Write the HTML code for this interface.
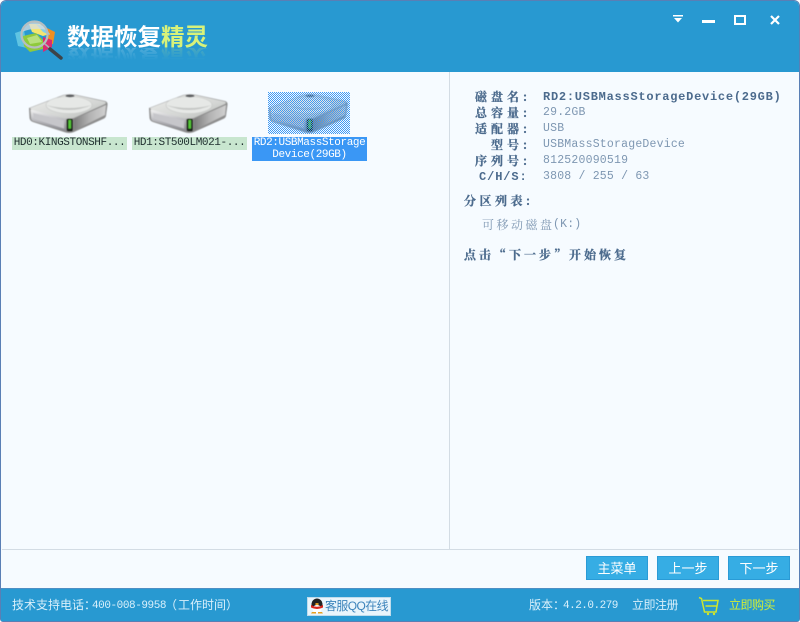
<!DOCTYPE html>
<html><head><meta charset="utf-8">
<style>
html,body{margin:0;padding:0;background:#fff;}
#w{position:relative;width:800px;height:622px;overflow:hidden;font-family:"Liberation Mono","Noto Serif CJK SC",serif;font-size:12px;}
#frame{position:absolute;left:0;top:0;width:798px;height:620px;border:1px solid #5a7fb5;border-radius:6px 6px 3px 3px;background:#f6fbff;overflow:hidden;}
.a{position:absolute;white-space:nowrap;line-height:14px;}
.lab{color:#4c6b8d;font-weight:bold;letter-spacing:4px;font-family:"Noto Serif CJK SC",serif;-webkit-text-stroke:.3px #4c6b8d;}
.val{color:#7e97b2;font-size:11.5px;letter-spacing:.2px;left:543px;font-family:"Liberation Mono",monospace;}
.cap{background:#c8e6cf;color:#1f2f2f;font-size:11px;letter-spacing:-.4px;height:13px;line-height:13px;text-align:center;width:115px;position:absolute;top:137px;font-family:"Liberation Mono",monospace;}
.btn{position:absolute;top:556px;width:60px;height:22px;background:#36ade4;border:1px solid #2a9bd6;color:#fff;text-align:center;line-height:23px;font-size:13px;font-family:"WenQuanYi Zen Hei",sans-serif;}
.st{color:#d9f0fb;font-family:"WenQuanYi Zen Hei",sans-serif;}
.n{font-family:"Liberation Mono",monospace;font-size:11px;color:#d9f0fb;}
.title{font:bold 23.500px/28px 'WenQuanYi Zen Hei','Noto Sans CJK SC',sans-serif;color:#fff;}
</style></head>
<body><div id="w">
<div id="frame"></div>
<div class="a" style="left:1px;top:1px;width:798px;height:71px;background:#2899d1;border-radius:5px 5px 0 0;"></div>
<div class="a" style="left:1px;top:588px;width:798px;height:33px;background:#2899d1;border-top:1px solid #4d8fc4;box-sizing:border-box;"></div>
<div class="a" style="left:449px;top:72px;width:1px;height:477px;background:#d3dce4;"></div>
<div class="a" style="left:2px;top:549px;width:796px;height:1px;background:#d3dce4;"></div>

<svg class="a" style="left:0;top:0" width="800" height="622" viewBox="0 0 800 622">
<defs>
<linearGradient id="top" x1="0" y1="0" x2="1" y2="1"><stop offset="0" stop-color="#eeeeec"/><stop offset=".6" stop-color="#d4d6d4"/><stop offset="1" stop-color="#b4b6b4"/></linearGradient>
<linearGradient id="front" x1="0" y1="0" x2="0" y2="1"><stop offset="0" stop-color="#f4f4f4"/><stop offset=".4" stop-color="#c4c4c8"/><stop offset="1" stop-color="#84848a"/></linearGradient>
<linearGradient id="side" x1="0" y1="0" x2="1" y2="0"><stop offset="0" stop-color="#7c7c7c"/><stop offset=".5" stop-color="#b4b4b4"/><stop offset="1" stop-color="#d0d0d0"/></linearGradient>
<filter id="soft" x="-5%" y="-5%" width="110%" height="110%"><feGaussianBlur stdDeviation=".45"/></filter>
<g id="drive" filter="url(#soft)">
<path d="M29 108 L63 95 Q70 93.500 77 95 L105 101 Q108 102 107.500 105 L106 116 Q105.500 118 103 119 L74 132 Q69 134 64 132 L33 122 Q30 121 29.500 118 Z" fill="#8e8e8e"/>
<path d="M30 108 L63 95.500 Q70 94 77 95.500 L104.500 101.500 Q107 102.500 105 104 L76 117 Q70 120 64 118.500 L32 110.500 Z" fill="url(#top)"/>
<ellipse cx="69" cy="105" rx="23" ry="8.500" fill="#e6e8e6" stroke="#c6c8c6" stroke-width=".6"/>
<path d="M46 105 Q69 115 92 105 Q69 111 46 105Z" fill="#c4c6c4"/>
<ellipse cx="70" cy="96" rx="4.500" ry="1.300" fill="#55575a"/>
<path d="M30.500 109.500 L66 119 L66 131.500 L33 121 Q31 120 31 117 Z" fill="url(#front)"/>
<path d="M33 113 L64 120.500 L64 128.500 L34 119 Z" fill="#c6c6ca"/>
<path d="M74 119 L106 105 L105 115 L74 130.500 Z" fill="url(#side)"/>
<rect x="66.500" y="118.500" width="6.500" height="13" rx="2" fill="#1c221b"/>
<rect x="68.500" y="120" width="2.500" height="8.500" fill="#55c838"/>
</g>
<pattern id="ck" width="2" height="2" patternUnits="userSpaceOnUse"><rect width="1" height="1" fill="#4099f3"/><rect x="1" y="1" width="1" height="1" fill="#4099f3"/></pattern>
</defs>

<!-- logo -->
<path d="M15 33 L24 30 L27 48 L18 46 Z" fill="#5fc4e2"/>
<path d="M47 28 L55 32 L53 44 L46 45 Z" fill="#ee8f22"/>
<path d="M29 24 L40 24 L50 34 L43 36 L32 32 Z" fill="#f4e670"/>
<path d="M36 24 L46 27 L50 35 L43 32 Z" fill="#86cfe8"/>
<path d="M23 36 L36 33 L44 41 L43 49 L30 52 L24 46 Z" fill="#8fca3c"/>
<path d="M27 38 L37 35 L42 42 L30 44 Z" fill="#b8e07e"/>
<path d="M43 37 L52 40 L52 47 L43 52 Z" fill="#d92b72"/>
<path d="M22 32 A13 13 0 0 1 47 30 Q33 27 22 32Z" fill="#d8dee0" fill-opacity=".75"/>
<circle cx="34.500" cy="34.500" r="13" fill="none" stroke="#b6bec1" stroke-width="2.200"/>
<path d="M45 44 L52 50" stroke="#aab2b5" stroke-width="1.500"/>
<path d="M50 49 L61 58" stroke="#3d4448" stroke-width="3.500" stroke-linecap="round"/>

<!-- drives -->
<use href="#drive"/>
<use href="#drive" x="120"/>
<g>
<rect x="268" y="92" width="82" height="42" fill="#f6fbff"/>
<use href="#drive" x="240"/>
<rect x="268" y="92" width="82" height="42" fill="url(#ck)"/>
</g>

<!-- window icons -->
<path d="M673 15h10v1.500h-10z" fill="#fff"/>
<path d="M674 18h8l-4 4.500z" fill="#fff"/>
<rect x="702" y="20" width="13" height="3" fill="#fff"/>
<rect x="735" y="16" width="10" height="8" fill="none" stroke="#fff" stroke-width="2"/>
<path d="M771 16 L779 24 M779 16 L771 24" stroke="#fff" stroke-width="2.200"/>

<!-- QQ button -->
<rect x="307.500" y="597.500" width="83" height="18" fill="#e9f5fc" stroke="#bfdcec"/>
<ellipse cx="317" cy="604.500" rx="5.500" ry="6" fill="#222"/>
<ellipse cx="317" cy="609" rx="4.500" ry="4" fill="#fff"/>
<path d="M311 605 Q317 608.500 323 605 L323 607.500 Q317 610.500 311 607.500Z" fill="#d9261c"/>
<ellipse cx="317" cy="604" rx="1.800" ry="1" fill="#e8a020"/>
<path d="M312 612h4v1.500h-5zM318 612h4l1 1.500h-5z" fill="#e8a020"/>

<!-- cart -->
<path d="M699 597.500 L701.500 598.500 L704.500 612 L716 612 L718 600.500 L703 600.500 M705.500 606 L717 606" fill="none" stroke="#cfe62c" stroke-width="1.500"/>
<circle cx="708" cy="614" r="1.200" fill="#cfe62c"/><circle cx="714" cy="614" r="1.200" fill="#cfe62c"/>
</svg>

<!-- title -->
<div class="a title" style="left:67px;top:21px;">数据恢复<span style="color:#d8f27a">精灵</span></div>
<div class="a" style="left:67px;top:48px;height:12px;width:145px;overflow:hidden;opacity:.18;-webkit-mask-image:linear-gradient(to bottom,#000,transparent);mask-image:linear-gradient(to bottom,#000,transparent);"><div class="title" style="transform:scaleY(-1);margin-top:-4px;line-height:28px;">数据恢复<span style="color:#d8f27a">精灵</span></div></div>

<!-- captions -->
<div class="cap" style="left:12px;">HD0:KINGSTONSHF...</div>
<div class="cap" style="left:132px;">HD1:ST500LM021-...</div>
<div class="cap" style="left:252px;height:24px;line-height:12px;background:#3a97f5;color:#fff;">RD2:USBMassStorage<br>Device(29GB)</div>

<!-- details -->
<div class="a lab" style="left:475px;top:90px;">磁盘名:</div>
<div class="a" style="left:543px;top:90px;color:#4c6b8d;font:bold 12px/14px 'Liberation Mono',monospace;letter-spacing:.75px;">RD2:USBMassStorageDevice(29GB)</div>
<div class="a lab" style="left:475px;top:106px;">总容量:</div><div class="a val" style="top:106px;">29.2GB</div>
<div class="a lab" style="left:475px;top:122px;">适配器:</div><div class="a val" style="top:122px;">USB</div>
<div class="a lab" style="left:491px;top:138px;">型号:</div><div class="a val" style="top:138px;">USBMassStorageDevice</div>
<div class="a lab" style="left:475px;top:154px;">序列号:</div><div class="a val" style="top:154px;">812520090519</div>
<div class="a" style="left:479px;top:170px;color:#4c6b8d;font:bold 12px/14px 'Liberation Mono',monospace;letter-spacing:.9px;">C/H/S:</div><div class="a val" style="top:170px;">3808 / 255 / 63</div>
<div class="a lab" style="left:464px;top:194px;letter-spacing:3.500px;">分区列表:</div>
<div class="a" style="left:482px;top:218px;color:#7e97b2;letter-spacing:2.500px;font-family:'Noto Serif CJK SC',serif;">可移动磁盘</div>
<div class="a val" style="left:553px;top:218px;letter-spacing:.2px;">(K:)</div>
<div class="a lab" style="left:464px;top:248px;letter-spacing:3px;">点击“下一步”开始恢复</div>

<div class="btn" style="left:586px;">主菜单</div>
<div class="btn" style="left:657px;">上一步</div>
<div class="btn" style="left:728px;">下一步</div>

<!-- status -->
<div class="a st" style="left:12px;top:598px;">技术支持电话&#xFF1A;</div>
<div class="a n" style="left:92px;top:599px;letter-spacing:-.43px;">400-008-9958</div>
<div class="a st" style="left:165px;top:598px;">&#xFF08;</div>
<div class="a st" style="left:178px;top:598px;">工作时间</div>
<div class="a st" style="left:226px;top:598px;">&#xFF09;</div>
<div class="a" style="left:325px;top:599px;color:#3d84bb;font-family:'WenQuanYi Zen Hei',sans-serif;font-size:12px;letter-spacing:-.6px;">客服QQ在线</div>
<div class="a st" style="left:529px;top:598px;">版本&#xFF1A;</div>
<div class="a n" style="left:563px;top:599px;letter-spacing:-.5px;">4.2.0.279</div>
<div class="a st" style="left:632px;top:598px;letter-spacing:-.5px;">立即注册</div>
<div class="a st" style="left:729px;top:598px;color:#d3ee34;letter-spacing:-.5px;">立即购买</div>
</div></body></html>
